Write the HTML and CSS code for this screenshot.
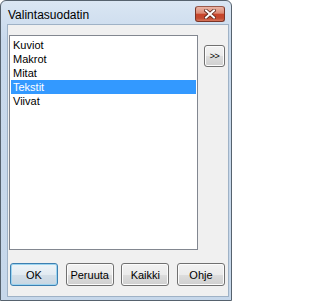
FILE: index.html
```html
<!DOCTYPE html>
<html>
<head>
<meta charset="utf-8">
<link rel="stylesheet" href="styles.css">
</head>
<body>
<div class="window">
  <div class="titlebar">
    <span class="title">Valintasuodatin</span>
    <div class="close">
      <svg width="12" height="10" viewBox="0 0 12 10">
        <path d="M2 1.5 L10 8.5 M10 1.5 L2 8.5" stroke="#5a2418" stroke-width="3.6" stroke-linecap="square" fill="none"/>
        <path d="M2 1.5 L10 8.5 M10 1.5 L2 8.5" stroke="#ffffff" stroke-width="2" stroke-linecap="square" fill="none"/>
      </svg>
    </div>
  </div>
  <div class="client">
    <div class="toprow">
      <div class="listbox">
        <div class="item">Kuviot</div>
        <div class="item">Makrot</div>
        <div class="item">Mitat</div>
        <div class="item selected">Tekstit</div>
        <div class="item">Viivat</div>
      </div>
      <button class="btn more">&gt;&gt;</button>
    </div>
    <div class="buttons">
      <button class="btn default">OK</button>
      <button class="btn">Peruuta</button>
      <button class="btn">Kaikki</button>
      <button class="btn">Ohje</button>
    </div>
  </div>
</div>
</body>
</html>
```

FILE: styles.css
```css
html, body {
  margin: 0;
  padding: 0;
  background: #ffffff;
}
.window {
  box-sizing: border-box;
  width: 232px;
  height: 301px;
  border: 1px solid #56626e;
  border-radius: 6px 6px 0 0;
  background: linear-gradient(#dae6f3, #c8d9ec 40px, #c6d7ea);
  display: flex;
  flex-direction: column;
  padding: 0 2px 3px 6px;
  font-family: "Liberation Sans", Arial, sans-serif;
}
.titlebar {
  height: 23px;
  display: flex;
  align-items: flex-start;
  margin-left: -6px;
  margin-right: -2px;
  flex: none;
}
.title {
  margin-top: 6px;
  margin-left: 7px;
  font-size: 12px;
  line-height: 16px;
  color: #000000;
}
.close {
  margin-left: auto;
  margin-right: 6px;
  margin-top: 5px;
  box-sizing: border-box;
  width: 30px;
  height: 16px;
  border: 1px solid #7a3426;
  border-top-color: #9a5a4c;
  border-radius: 3px;
  background: linear-gradient(#eab5a6, #dc8a74 45%, #c8442a 50%, #c24a30 80%, #d7765c);
  display: flex;
  align-items: center;
  justify-content: center;
}
.close svg {
  display: block;
}
.client {
  flex: 1;
  border: 1px solid #9fb2c6;
  background: #f0f0f0;
  padding: 10px 0 0 1px;
  display: flex;
  flex-direction: column;
}
.toprow {
  display: flex;
  align-items: flex-start;
}
.listbox {
  box-sizing: border-box;
  width: 189px;
  height: 215px;
  border: 1px solid #828790;
  background: #ffffff;
  padding: 2px 1px;
}
.item {
  height: 14px;
  line-height: 14px;
  font-size: 11px;
  padding-left: 2px;
  color: #000000;
  white-space: nowrap;
}
.item.selected {
  background: #3399ff;
  color: #ffffff;
}
.btn {
  box-sizing: border-box;
  border: 1px solid #707070;
  border-radius: 3px;
  background: linear-gradient(#f2f2f2, #ebebeb 50%, #dddddd 51%, #cfcfcf);
  box-shadow: inset 0 0 0 1px #fcfcfc;
  font-family: "Liberation Sans", Arial, sans-serif;
  font-size: 11px;
  color: #000000;
  padding: 0;
  margin: 0;
}
.more {
  width: 21px;
  height: 22px;
  margin-left: 6px;
  margin-top: 10px;
  font-size: 9px;
  letter-spacing: -0.5px;
}
.buttons {
  display: flex;
  justify-content: space-between;
  width: 215px;
  margin-top: 13px;
  margin-left: 1px;
}
.buttons .btn {
  width: 48px;
  height: 23px;
}
.btn.default {
  border-color: #3c7fb1;
  box-shadow: inset 0 0 0 1px #9cd4f0;
  background: linear-gradient(#eef4f8, #e2ebf2 50%, #d3dfe9 51%, #c8d6e2);
}
```
